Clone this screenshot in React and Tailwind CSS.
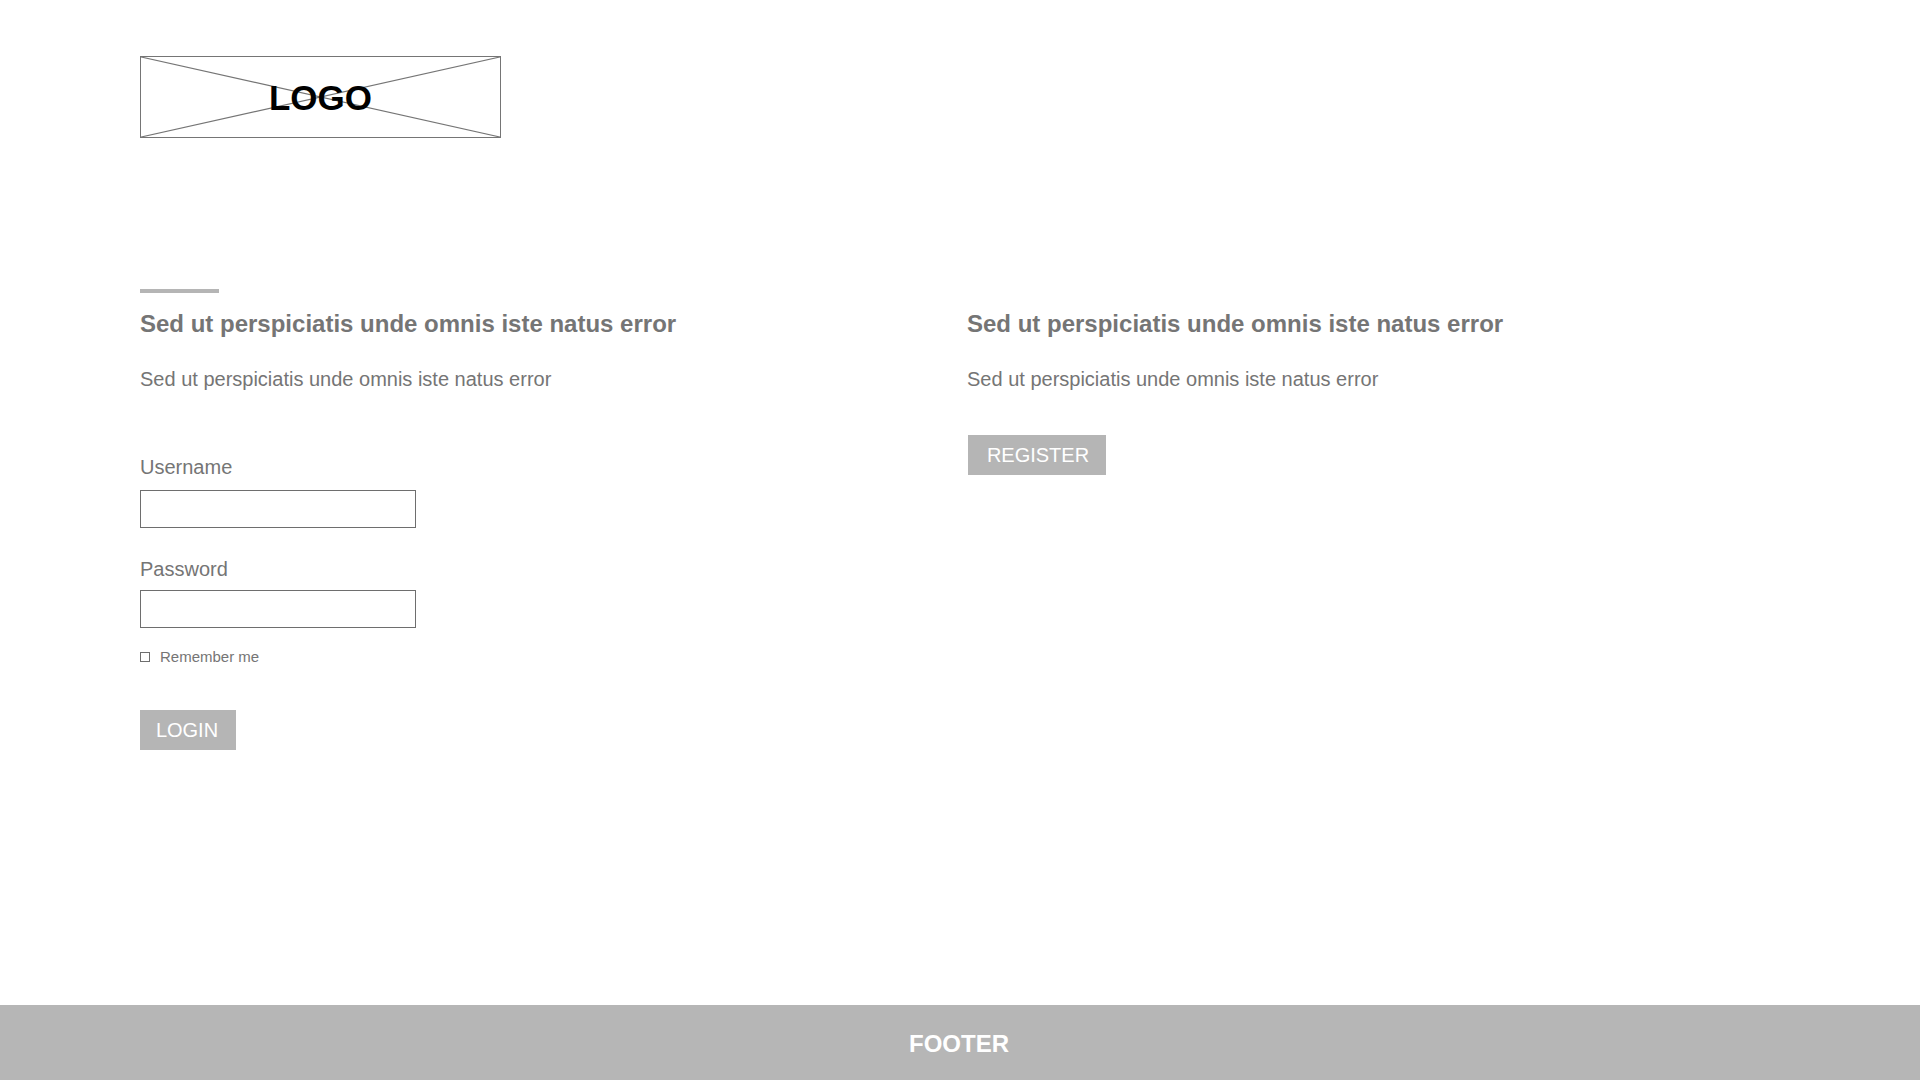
const font = "font-['Liberation_Sans',Arial,sans-serif]";

function Logo() {
  return (
    <div className="relative w-[361px] h-[82px] border border-[#757575] flex items-center justify-center">
      <svg className="absolute inset-0 w-full h-full" viewBox="0 0 359 80" preserveAspectRatio="none">
        <line x1="0" y1="0" x2="359" y2="80" stroke="#757575" strokeWidth="1.2" />
        <line x1="359" y1="0" x2="0" y2="80" stroke="#757575" strokeWidth="1.2" />
      </svg>
      <span className="relative text-[35px] leading-none font-bold text-black">LOGO</span>
    </div>
  );
}

function Field({ label, className, inputClass }) {
  return (
    <label className={`block ${className}`}>
      <span className="block text-[20px] leading-[24px] text-[#757575]">{label}</span>
      <input type="text" className={`block w-[276px] h-[38px] border border-[#6e6e6e] bg-white ${inputClass}`} />
    </label>
  );
}

export default function App() {
  return (
    <div className={`${font} min-h-[1080px] flex flex-col bg-white`}>
      <header className="pl-[140px] pt-[56px]">
        <Logo />
      </header>

      <main className="flex-1 pl-[140px] pt-[151px] flex">
        <section className="w-[827px]">
          <div className="w-[79px] h-[4px] bg-[#b5b5b5]" />
          <h2 className="mt-[17px] text-[24px] leading-[28px] font-bold text-[#757575]">
            Sed ut perspiciatis unde omnis iste natus error
          </h2>
          <p className="mt-[29px] text-[20px] leading-[24px] text-[#757575]">
            Sed ut perspiciatis unde omnis iste natus error
          </p>

          <form>
            <Field label="Username" className="mt-[64px]" inputClass="mt-[11px]" />
            <Field label="Password" className="mt-[29px]" inputClass="mt-[9px]" />
            <label className="mt-[19px] flex items-center gap-[10px] text-[15px] leading-[20px] text-[#757575]">
              <span className="block w-[10px] h-[10px] border border-[#6e6e6e]" />
              Remember me
            </label>
            <button type="button" className="mt-[43px] block w-[96px] h-[40px] bg-[#b5b5b5] text-white text-[20px]">
              <span className="block -translate-x-[1px]">LOGIN</span>
            </button>
          </form>
        </section>

        <section className="pt-[21px]">
          <h2 className="text-[24px] leading-[28px] font-bold text-[#757575]">
            Sed ut perspiciatis unde omnis iste natus error
          </h2>
          <p className="mt-[29px] text-[20px] leading-[24px] text-[#757575]">
            Sed ut perspiciatis unde omnis iste natus error
          </p>
          <button type="button" className="mt-[44px] ml-px block w-[138px] h-[40px] bg-[#b5b5b5] text-white text-[20px]">
            <span className="block translate-x-[1px]">REGISTER</span>
          </button>
        </section>
      </main>

      <footer className="h-[75px] bg-[#b6b6b6] flex items-center justify-center">
        <span className="text-[24px] font-bold text-white -translate-x-[1px] translate-y-px">FOOTER</span>
      </footer>
    </div>
  );
}
